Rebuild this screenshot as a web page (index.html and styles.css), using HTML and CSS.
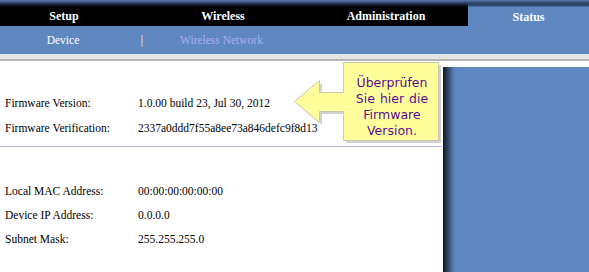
FILE: index.html
```html
<!DOCTYPE html>
<html lang="de">
<head>
  <meta charset="UTF-8" />
  <title>Status - Device</title>
  <link rel="stylesheet" href="styles.css">
</head>
<body>
  <div class="page">
    <div class="topnav">
      <div class="tabs">
        <div class="tab tab-setup">Setup</div>
        <div class="tab tab-wireless">Wireless</div>
        <div class="tab tab-admin">Administration</div>
      </div>
      <div class="tab-status">Status</div>
    </div>

    <div class="subnav">
      <div class="sub-item sub-device">Device</div>
      <div class="sub-sep">|</div>
      <div class="sub-item sub-wireless">Wireless Network</div>
    </div>
    <div class="rule"></div>

    <div class="main">
      <div class="content">
        <div class="group first">
          <div class="row"><span class="label">Firmware Version:</span><span class="value">1.0.00 build 23, Jul 30, 2012</span></div>
          <div class="row"><span class="label">Firmware Verification:</span><span class="value">2337a0ddd7f55a8ee73a846defc9f8d13</span></div>
        </div>
        <div class="divider"></div>
        <div class="group second">
          <div class="row"><span class="label">Local MAC Address:</span><span class="value">00:00:00:00:00:00</span></div>
          <div class="row"><span class="label">Device IP Address:</span><span class="value">0.0.0.0</span></div>
          <div class="row"><span class="label">Subnet Mask:</span><span class="value">255.255.255.0</span></div>
        </div>
      </div>
      <div class="sidebar"></div>
    </div>

    <!-- tip balloon over the content -->
    <div class="callout">
      <svg class="callout-shape" width="155" height="90" viewBox="0 0 155 90">
        <path class="shade" d="M53,2 H148 V80 H53 V51 H29 V62 L4,41 L29,20 V32 H53 Z" transform="translate(3,3)"/>
        <path class="bubble" d="M53.5,2.5 H148.5 V80.5 H53.5 V51.5 H29.5 V62.5 L4.5,41.5 L29.5,20.5 V32.5 H53.5 Z"/>
      </svg>
      <div class="callout-text">Überprüfen Sie hier die Firmware Version.</div>
    </div>
  </div>
</body>
</html>
```

FILE: styles.css
```css
body {
  margin: 0;
  padding: 0;
  background: white;
  font-family: 'Liberation Serif', 'Times New Roman', serif;
}

.page {
  position: relative;
  width: 589px;
  height: 272px;
  overflow: hidden;
}

/* === Main tabs === */
.topnav {
  display: flex;
  height: 26px;
}

.tabs {
  display: flex;
  width: 468px;
  background: linear-gradient(to bottom, #5a7aaa 0, #3a5580 2px, #1c2a44 4px, #080c14 6px, #000 7px);
}

.tab {
  color: white;
  font-weight: bold;
  font-size: 12px;
  text-align: center;
  padding-top: 10px;
  line-height: 12px;
}

.tab-setup { width: 128px; }
.tab-wireless { width: 190px; }
.tab-admin { width: 136px; }

.tab-status {
  flex: 1;
  color: white;
  font-weight: bold;
  font-size: 12px;
  text-align: center;
  padding-top: 11px;
  line-height: 12px;
  background: linear-gradient(to bottom, #5a7aaa 0, #3a5580 2px, #2a3c5c 4px, #34507a 6px, #5f88c1 7px);
}

/* === Sub navigation === */
.subnav {
  display: flex;
  height: 28px;
  background: #5f88c1;
  font-size: 11.5px;
  line-height: 28px;
}

.sub-item {
  text-align: center;
}

.sub-device {
  width: 126px;
  color: white;
}

.sub-sep {
  width: 32px;
  text-align: center;
  color: white;
}

.sub-wireless {
  width: 127px;
  color: #aab0ee;
}

.rule {
  height: 5px;
  background: #e5e5e5;
  border-bottom: 2px solid #b8b8b8;
}

/* === Content === */
.main {
  display: flex;
  height: 211px;
}

.content {
  width: 443px;
  padding-top: 30px;
  font-size: 11.5px;
  color: black;
}

.row {
  display: flex;
  height: 25px;
  line-height: 25px;
}

.second .row {
  height: 24px;
  line-height: 24px;
}

.label {
  width: 133px;
  padding-left: 5px;
}

.divider {
  height: 1px;
  margin: 5px 1px 32px 0;
  background: #b4b4ec;
}

.sidebar {
  flex: 1;
  margin-top: 6px;
  background: linear-gradient(to right, #0e1520 0, #22324c 3px, #3e5c88 7px, #5a82ba 11px, #5f88c1 13px);
}

/* === Callout === */
.callout {
  position: absolute;
  left: 290px;
  top: 60px;
  width: 155px;
  height: 90px;
}

.callout-shape {
  display: block;
}

.shade {
  fill: #d2d2d2;
}

.bubble {
  fill: #ffff9c;
  stroke: #c8c8b0;
  stroke-width: 1;
}

.callout-text {
  position: absolute;
  left: 56px;
  top: 8px;
  width: 92px;
  height: 78px;
  display: flex;
  align-items: center;
  justify-content: center;
  text-align: center;
  font-family: 'DejaVu Sans', Verdana, sans-serif;
  font-size: 12.5px;
  line-height: 16px;
  word-spacing: 1px;
  color: #600a90;
}
```
